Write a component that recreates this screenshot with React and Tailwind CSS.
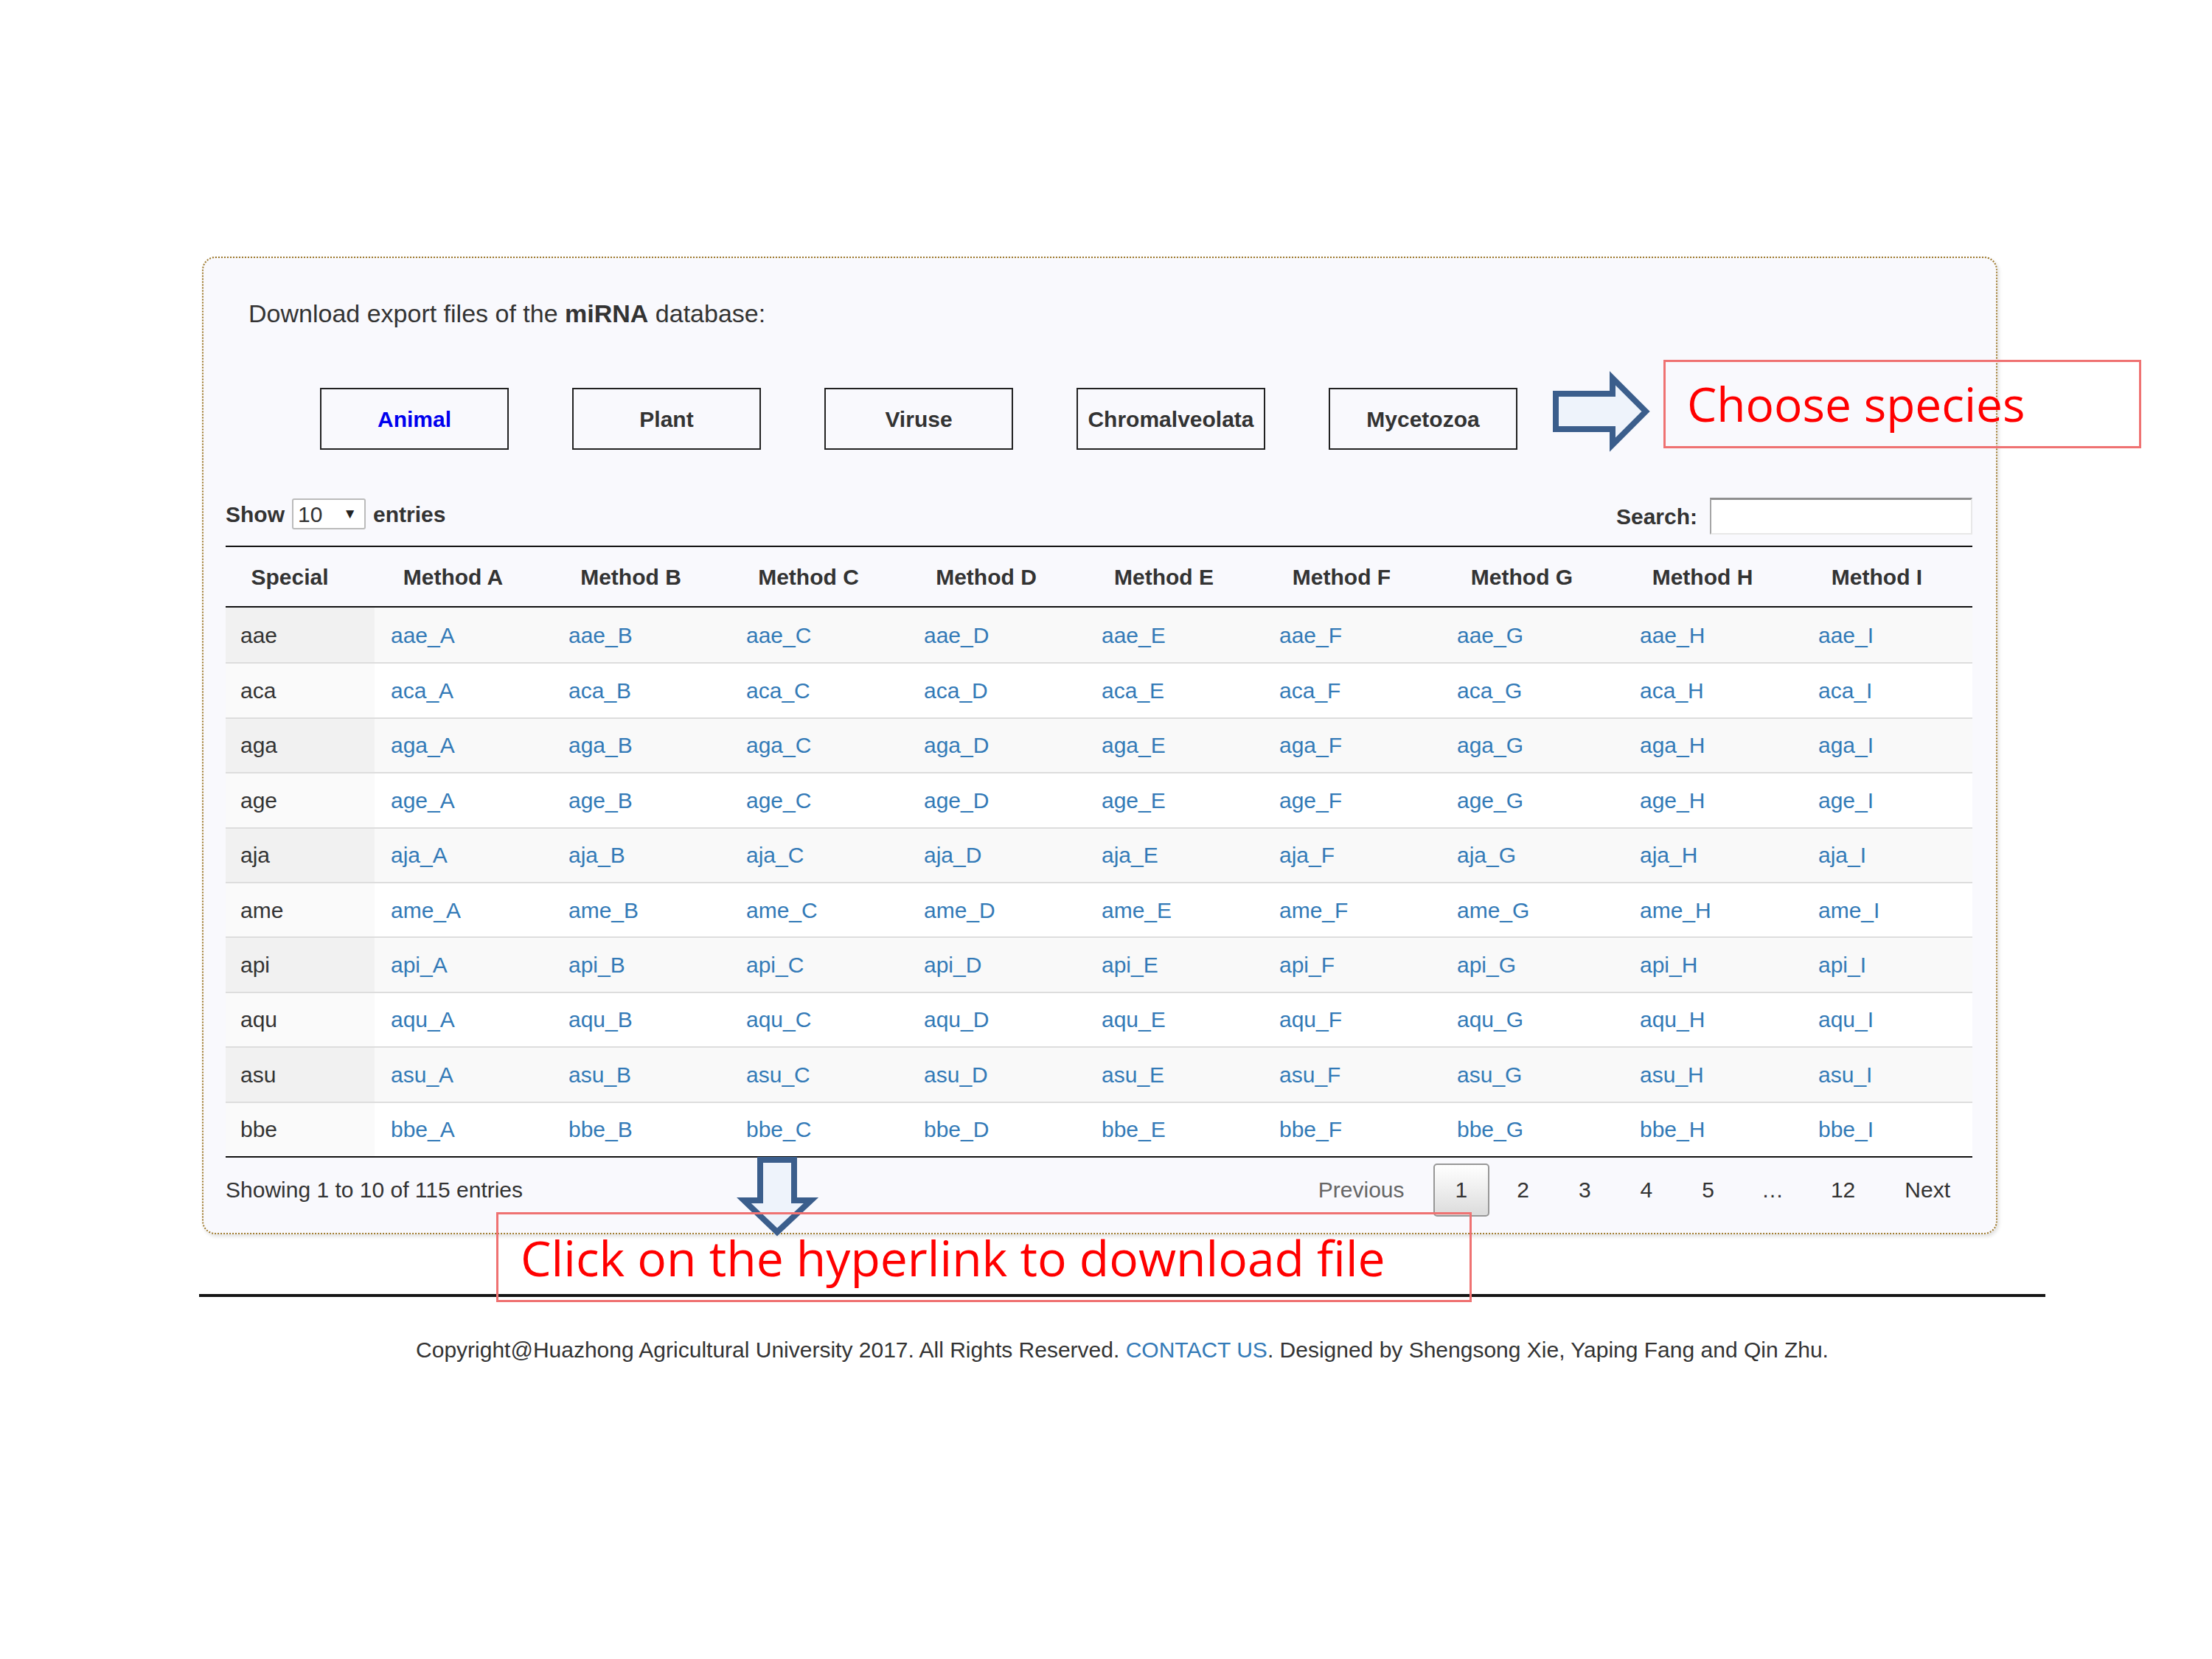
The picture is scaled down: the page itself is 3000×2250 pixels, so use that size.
const species = ["aae", "aca", "aga", "age", "aja", "ame", "api", "aqu", "asu", "bbe"];
const methods = ["A", "B", "C", "D", "E", "F", "G", "H", "I"];
const kingdoms = ["Animal", "Plant", "Viruse", "Chromalveolata", "Mycetozoa"];
const pages = ["1", "2", "3", "4", "5"];

// column template shared by header and body rows
const cols =
  "grid grid-cols-[202px_241px_241px_241px_241px_241px_241px_248px_242px_231px]";

function KingdomButton({ label, active }) {
  return (
    <div
      className={
        active
          ? "w-[256px] h-[84px] border-2 border-[#222] flex items-center justify-center text-[30px] font-bold text-[#0000ee]"
          : "w-[256px] h-[84px] border-2 border-[#222] flex items-center justify-center text-[30px] font-bold text-[#333]"
      }
    >
      {label}
    </div>
  );
}

function DataRow({ name, index }) {
  const odd = index % 2 === 0;
  return (
    <div
      className={
        index === 0
          ? `${cols} h-[74.4px] text-[30px]`
          : `${cols} h-[74.4px] text-[30px] border-t-2 border-[#dddddd]`
      }
    >
      <div
        className={
          odd
            ? "flex items-center pl-[20px] bg-[#f1f1f1] text-[#333]"
            : "flex items-center pl-[20px] bg-[#fafafa] text-[#333]"
        }
      >
        {name}
      </div>
      {methods.map((m) => (
        <div
          key={m}
          className={
            odd
              ? "flex items-center pl-[22px] bg-[#f9f9f9] text-[#337ab7]"
              : "flex items-center pl-[22px] bg-white text-[#337ab7]"
          }
        >
          {name}_{m}
        </div>
      ))}
    </div>
  );
}

export default function App() {
  return (
    <div className="relative w-[3000px] h-[2250px] overflow-hidden bg-white font-['Liberation_Sans',Arial,sans-serif] text-[#333]">
      <div className="pt-[348px]">
        {/* Download panel */}
        <div className="ml-[274px] w-[2435px] rounded-[18px] border-2 border-dotted border-[#9f7a2c] bg-[#f9f9fd] pt-[55px] pl-[30px] pr-[32px] pb-[22px] shadow-[2px_3px_5px_rgba(0,0,0,0.12)]">
          <p className="ml-[31px] text-[34px] leading-[40px]">
            Download export files of the <b>miRNA</b> database:
          </p>

          <div className="mt-[81px] ml-[128px] flex gap-[86px]">
            {kingdoms.map((k, i) => (
              <KingdomButton key={k} label={k} active={i === 0} />
            ))}
          </div>

          <div className="mt-[65px] h-[50px] flex items-center justify-between text-[30px] font-bold">
            <div className="-mt-[6px] flex items-center gap-[10px]">
              <span>Show</span>
              <div className="w-[100px] h-[42px] flex items-center justify-between rounded-[3px] border-2 border-[#bbbbbb] bg-white pl-[6px] pr-[10px] font-normal">
                <span>10</span>
                <span className="text-[19px] text-[#222]">▼</span>
              </div>
              <span>entries</span>
            </div>
            <div className="flex items-center gap-[17px]">
              <span>Search:</span>
              <div className="w-[356px] h-[50px] bg-white border-2 border-t-[3px] border-t-[#8f8f8f] border-l-[#a5a5a5] border-r-[#e8e8e8] border-b-[#e8e8e8]" />
            </div>
          </div>

          {/* Table */}
          <div className="mt-[15px] border-t-2 border-b-2 border-[#111]">
            <div className={`${cols} h-[82px] border-b-2 border-[#111] text-[30px] font-bold`}>
              <div className="flex items-center justify-center pl-[41px] pr-[69px]">Special</div>
              {methods.map((m) => (
                <div key={m} className="flex items-center justify-center pl-[41px] pr-[69px] whitespace-nowrap">
                  Method {m}
                </div>
              ))}
            </div>
            {species.map((s, i) => (
              <DataRow key={s} name={s} index={i} />
            ))}
          </div>

          <div className="mt-[8px] flex items-center justify-between text-[30px]">
            <span>Showing 1 to 10 of 115 entries</span>
            <div className="flex items-center gap-[7px]">
              <span className="h-[72px] px-[30px] flex items-center border-2 border-transparent text-[#666]">
                Previous
              </span>
              {pages.map((p, i) => (
                <span
                  key={p}
                  className={
                    i === 0
                      ? "h-[72px] px-[28px] flex items-center rounded-[5px] border-2 border-[#979797] bg-linear-to-b from-white to-[#dcdcdc]"
                      : "h-[72px] px-[28px] flex items-center border-2 border-transparent"
                  }
                >
                  {p}
                </span>
              ))}
              <span className="h-[72px] px-[27px] flex items-center">…</span>
              <span className="h-[72px] px-[28px] flex items-center border-2 border-transparent">12</span>
              <span className="h-[72px] px-[28px] flex items-center border-2 border-transparent">Next</span>
            </div>
          </div>
        </div>

        {/* Footer */}
        <div className="ml-[270px] mt-[81px] w-[2504px] border-t-4 border-[#151515]">
          <p className="mt-[54px] text-center text-[30px] leading-[36px]">
            Copyright@Huazhong Agricultural University 2017. All Rights Reserved.{" "}
            <span className="text-[#337ab7]">CONTACT US</span>. Designed by Shengsong Xie, Yaping Fang and Qin Zhu.
          </p>
        </div>
      </div>

      {/* Annotations */}
      <svg className="absolute left-[2100px] top-[498px]" width="145" height="122" viewBox="0 0 145 122">
        <polygon
          points="10,36 87,36 87,15 132,60 87,105 87,84 10,84"
          fill="#eef3fb"
          stroke="#3b5e8c"
          strokeWidth="8"
          strokeLinejoin="miter"
        />
      </svg>
      <div className="absolute left-[2256px] top-[488px] w-[648px] h-[120px] border-[3px] border-[#ef7272] flex items-center pl-[29px] font-['Open_Sans',sans-serif] text-[64px] leading-none text-[#ff0000]">
        Choose species
      </div>

      <svg className="absolute left-[995px] top-[1562px]" width="120" height="122" viewBox="0 0 120 122">
        <polygon
          points="36,11 82,11 82,66 105,66 59,109 14,66 36,66"
          fill="#eef3fb"
          stroke="#3b5e8c"
          strokeWidth="8"
          strokeLinejoin="miter"
        />
      </svg>
      <div className="absolute left-[673px] top-[1644px] w-[1323px] h-[122px] border-[3px] border-[#ef7272] flex items-center pl-[30px] font-['Open_Sans',sans-serif] text-[66px] leading-none text-[#ff0000] whitespace-nowrap">
        Click on the hyperlink to download file
      </div>
    </div>
  );
}
